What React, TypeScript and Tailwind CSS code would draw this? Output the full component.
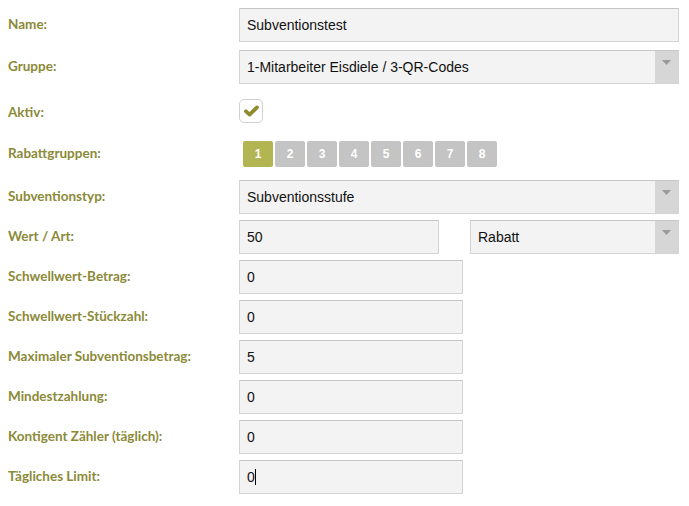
import type { ReactNode } from "react";

const labelFont = { fontFamily: "Lato, 'Open Sans', sans-serif" };
const inputFont = { fontFamily: "'Liberation Sans', Arial, sans-serif" };

function Row({ label, children, className = "", lift = true }: { label: string; children: ReactNode; className?: string; lift?: boolean }) {
  return (
    <div className={`flex items-center ${className}`}>
      <div
        className={`w-[231px] shrink-0 text-[13.5px] font-bold text-[#8b8a38] ${lift ? "-mt-[2px]" : "mt-[2px]"}`}
        style={labelFont}
      >
        {label}
      </div>
      {children}
    </div>
  );
}

function TextBox({ value, width = "w-[440px]", caret = false }: { value: string; width?: string; caret?: boolean }) {
  return (
    <div
      className={`${width} h-[34px] flex items-center px-[7px] bg-[#f3f3f3] border border-[#d4d4d4] border-t-[#c6c6c6] text-[14px] text-[#111]`}
      style={inputFont}
    >
      {value}
      {caret && <span className="inline-block w-px h-[16px] bg-black" />}
    </div>
  );
}

function SelectBox({ value, width = "w-[440px]" }: { value: string; width?: string }) {
  return (
    <div
      className={`${width} h-[34px] flex bg-[#f3f3f3] border border-[#d4d4d4] border-t-[#c6c6c6] text-[14px] text-[#111]`}
      style={inputFont}
    >
      <div className="flex-1 flex items-center px-[7px]">{value}</div>
      <div className="w-[23px] bg-[#d6d6d6] flex justify-center pt-[9px]">
        <svg width="9" height="5" viewBox="0 0 9 5" aria-hidden="true">
          <polygon points="0,0 9,0 4.5,5" fill="#9a9a9a" />
        </svg>
      </div>
    </div>
  );
}

export default function App() {
  const groups = [1, 2, 3, 4, 5, 6, 7, 8];
  return (
    <div className="w-[689px] h-[506px] bg-white pt-2 pl-2 flex flex-col">
      <Row label="Name:">
        <TextBox value="Subventionstest" />
      </Row>
      <Row label="Gruppe:" className="mt-2">
        <SelectBox value="1-Mitarbeiter Eisdiele / 3-QR-Codes" />
      </Row>
      <Row label="Aktiv:" className="mt-[15px]" lift={false}>
        <div className="w-[24px] h-[24px] rounded-[5px] border border-[#d0d0d0] bg-white flex items-center justify-center">
          <svg width="15" height="12" viewBox="0 0 15 12" aria-hidden="true">
            <path d="M2 6.3 L5.6 9.6 L13 2.4" fill="none" stroke="#8f8c2e" strokeWidth="3.8" strokeLinecap="round" strokeLinejoin="round" />
          </svg>
        </div>
      </Row>
      <Row label="Rabattgruppen:" className="mt-[18px]">
        <div className="flex gap-[2px] pl-[4px]">
          {groups.map((g) => (
            <div
              key={g}
              className={`w-[30px] h-[26px] rounded-[2px] flex items-center justify-center text-[12px] font-bold text-white ${
                g === 1 ? "bg-[#b2b552]" : "bg-[#c4c4c4]"
              }`}
              style={inputFont}
            >
              {g}
            </div>
          ))}
        </div>
      </Row>
      <Row label="Subventionstyp:" className="mt-[13px]">
        <SelectBox value="Subventionsstufe" />
      </Row>
      <Row label="Wert / Art:" className="mt-[6px]">
        <div className="flex gap-[31px]">
          <TextBox value="50" width="w-[200px]" />
          <SelectBox value="Rabatt" width="w-[209px]" />
        </div>
      </Row>
      <Row label="Schwellwert-Betrag:" className="mt-[6px]">
        <TextBox value="0" width="w-[224px]" />
      </Row>
      <Row label="Schwellwert-Stückzahl:" className="mt-[6px]">
        <TextBox value="0" width="w-[224px]" />
      </Row>
      <Row label="Maximaler Subventionsbetrag:" className="mt-[6px]">
        <TextBox value="5" width="w-[224px]" />
      </Row>
      <Row label="Mindestzahlung:" className="mt-[6px]">
        <TextBox value="0" width="w-[224px]" />
      </Row>
      <Row label="Kontigent Zähler (täglich):" className="mt-[6px]">
        <TextBox value="0" width="w-[224px]" />
      </Row>
      <Row label="Tägliches Limit:" className="mt-[6px]">
        <TextBox value="0" width="w-[224px]" caret />
      </Row>
    </div>
  );
}
